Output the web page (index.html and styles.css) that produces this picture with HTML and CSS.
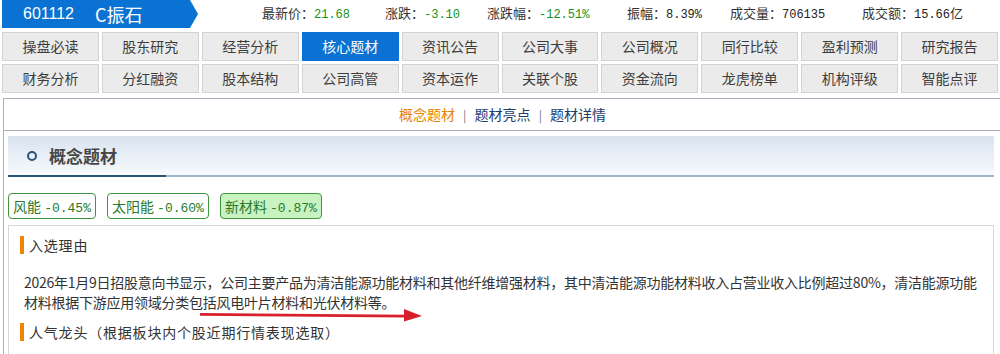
FILE: index.html
```html
<!DOCTYPE html>
<html lang="zh-CN">
<head>
  <meta charset="UTF-8">
  <meta name="viewport" content="width=device-width, initial-scale=1.0">
  <title>C振石 核心题材</title>
  <link rel="stylesheet" href="styles.css">
</head>
<body>
  <header class="quote-bar">
    <div class="stock-name">
      <span class="code">601112</span>
      <span class="name">C振石</span>
    </div>
    <ul class="quote">
      <li>最新价：<span class="val down">21.68</span></li>
      <li>涨跌：<span class="val down">-3.10</span></li>
      <li>涨跌幅：<span class="val down">-12.51%</span></li>
      <li>振幅：<span class="val">8.39%</span></li>
      <li>成交量：<span class="val">706135</span></li>
      <li>成交额：<span class="val">15.66</span>亿</li>
    </ul>
  </header>

  <nav class="tabs">
    <a href="#">操盘必读</a>
    <a href="#">股东研究</a>
    <a href="#">经营分析</a>
    <a href="#" class="active">核心题材</a>
    <a href="#">资讯公告</a>
    <a href="#">公司大事</a>
    <a href="#">公司概况</a>
    <a href="#">同行比较</a>
    <a href="#">盈利预测</a>
    <a href="#">研究报告</a>
    <a href="#">财务分析</a>
    <a href="#">分红融资</a>
    <a href="#">股本结构</a>
    <a href="#">公司高管</a>
    <a href="#">资本运作</a>
    <a href="#">关联个股</a>
    <a href="#">资金流向</a>
    <a href="#">龙虎榜单</a>
    <a href="#">机构评级</a>
    <a href="#">智能点评</a>
  </nav>

  <div class="panel">
    <div class="subnav">
      <a href="#" class="on">概念题材</a>
      <span class="sep">|</span>
      <a href="#">题材亮点</a>
      <span class="sep">|</span>
      <a href="#">题材详情</a>
    </div>

    <div class="section-head">
      <i class="dot"></i>概念题材
    </div>

    <div class="tags">
      <span class="tag">风能 <em>-0.45%</em></span>
      <span class="tag">太阳能 <em>-0.60%</em></span>
      <span class="tag hot">新材料 <em>-0.87%</em></span>
    </div>

    <div class="reason">
      <h4 class="sub-title">入选理由</h4>
      <p class="reason-text">2026年1月9日招股意向书显示，公司主要产品为清洁能源功能材料和其他纤维增强材料，其中清洁能源功能材料收入占营业收入比例超过80%，清洁能源功能材料根据下游应用领域分类包括风电叶片材料和光伏材料等。</p>
      <h4 class="sub-title">人气龙头（根据板块内个股近期行情表现选取）</h4>

      <!-- red annotation arrow -->
      <svg class="arrow" width="240" height="20" viewBox="0 0 240 20">
        <line x1="10" y1="9.3" x2="217" y2="11.2" stroke="#d7202b" stroke-width="2.7"/>
        <polygon points="214,4 232,11 214,16.5" fill="#d7202b"/>
      </svg>
    </div>
  </div>
</body>
</html>
```

FILE: styles.css
```css
html, body {
  overflow: hidden;
}

body {
  margin: 0;
  font-family: "Noto Sans CJK SC", "Liberation Sans", sans-serif;
  color: #333;
  background: #fff;
}

a {
  text-decoration: none;
}

/* top quote bar */
.quote-bar {
  display: flex;
  align-items: center;
  height: 28px;
}

.stock-name {
  flex-shrink: 0;
  display: flex;
  align-items: center;
  width: 196px;
  height: 28px;
  margin-left: 2px;
  padding-left: 21px;
  box-sizing: border-box;
  background: #0a72d2;
  color: #fff;
  clip-path: polygon(0 0, 188px 0, 196px 50%, 188px 100%, 0 100%);
}

.stock-name .code {
  font-family: "Liberation Sans", sans-serif;
  font-size: 16px;
  margin-right: 21px;
}

.stock-name .name {
  font-size: 18px;
  line-height: 28px;
}

.quote {
  display: grid;
  grid-template-columns: 123px 102px 140px 103px 132px auto;
  margin: 0 0 0 64px;
  padding: 0;
  list-style: none;
  font-size: 13px;
  line-height: 28px;
  color: #333;
  white-space: nowrap;
}

.quote .val {
  font-family: "Liberation Mono", monospace;
  font-size: 12px;
  color: #222;
}

.quote .val.down {
  color: #14921a;
}

/* tab grid */
.tabs {
  display: grid;
  grid-template-columns: repeat(10, 1fr);
  gap: 3px;
  padding: 4px 2px 0;
}

.tabs a {
  height: 27px;
  line-height: 27px;
  text-align: center;
  font-size: 14px;
  color: #3c3c3c;
  background: #ebebeb;
  border: 1px solid #d2d2d2;
}

.tabs a.active {
  background: #0a72d2;
  border-color: #0a72d2;
  color: #fff;
}

/* content panel */
.panel {
  margin: 5px -6px 0 3px;
  border: 1px solid #a9b4be;
}

.subnav {
  height: 31px;
  line-height: 31px;
  text-align: center;
  font-size: 14px;
  border-bottom: 1px solid #a9b4be;
  padding-right: 4px;
}

.subnav a {
  color: #1d3c72;
}

.subnav a.on {
  color: #e68300;
}

.subnav .sep {
  color: #777;
  font-size: 12px;
  margin: 0 5px;
}

.section-head {
  display: flex;
  align-items: center;
  height: 41px;
  margin: 5px 11px 0 4px;
  padding-bottom: 2px;
  box-sizing: border-box;
  background:
    linear-gradient(to right, #2b5373 158px, #9bb5ca 158px) bottom / 100% 2px no-repeat,
    linear-gradient(#d9e3ef, #f8fbfe);
  font-size: 17px;
  font-weight: bold;
  color: #474747;
}

.section-head .dot {
  width: 6px;
  height: 6px;
  margin: 1px 12px 0 19px;
  border: 2px solid #2b5373;
  border-radius: 50%;
}

.tags {
  display: flex;
  gap: 11px;
  margin: 16px 0 0 4px;
}

.tag {
  height: 24px;
  line-height: 24px;
  padding: 0 4px;
  font-size: 14px;
  color: #2a7a2a;
  border: 1px solid #3f963f;
  border-radius: 4px;
  background: #fff;
}

.tag em {
  font-style: normal;
  font-family: "Liberation Mono", monospace;
  font-size: 13px;
}

.tag.hot {
  background: #c8f3c1;
}

.reason {
  position: relative;
  margin: 6px 11px 0 4px;
  padding: 10px 0 20px 11px;
  border: 1px solid #d8d8d8;
}

.sub-title {
  margin: 0;
  height: 18px;
  line-height: 18px;
  padding-left: 5px;
  border-left: 4px solid #f08300;
  font-size: 14px;
  letter-spacing: 0.8px;
  font-weight: normal;
  color: #333;
}

.reason-text {
  margin: 18px 8px 11px 4px;
  font-size: 14px;
  line-height: 20px;
  letter-spacing: -0.25px;
  color: #333;
}

.arrow {
  position: absolute;
  left: 181px;
  top: 79px;
}
```
